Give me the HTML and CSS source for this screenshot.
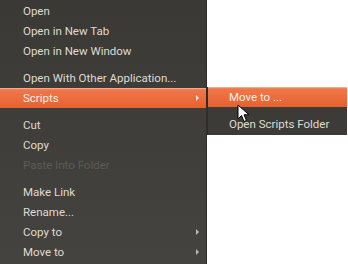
FILE: index.html
```html
<!DOCTYPE html>
<html lang="en">
<head>
    <meta charset="UTF-8">
    <title>Context Menu</title>
    <link rel="stylesheet" href="styles.css">
</head>
<body>

<div class="menu">
    <div class="item first">Open</div>
    <div class="item">Open in New Tab</div>
    <div class="item">Open in New Window</div>
    <div class="separator"></div>
    <div class="item">Open With Other Application...</div>
    <div class="item active has-sub">Scripts</div>
    <div class="separator"></div>
    <div class="item">Cut</div>
    <div class="item">Copy</div>
    <div class="item disabled">Paste Into Folder</div>
    <div class="separator"></div>
    <div class="item">Make Link</div>
    <div class="item">Rename...</div>
    <div class="item has-sub">Copy to</div>
    <div class="item has-sub">Move to</div>
</div>

<div class="submenu">
    <div class="item active">Move to ...</div>
    <div class="separator"></div>
    <div class="item">Open Scripts Folder</div>
</div>

<svg class="cursor" width="14" height="20" viewBox="0 0 14 20">
    <path d="M1 1 L1 15 L4.5 11.5 L7 17.5 L9.5 16.5 L7 10.8 L12 10.8 Z" fill="#fff" stroke="#000" stroke-width="1" stroke-linejoin="round"/>
</svg>

</body>
</html>
```

FILE: styles.css
```css
body {
    margin: 0;
    background: #fff;
    font-family: Roboto, 'Noto Sans', sans-serif;
    font-size: 11.5px;
    width: 348px;
    height: 264px;
    overflow: hidden;
    position: relative;
}
.menu {
    width: 207px;
    height: 264px;
    padding-top: 1px;
    box-sizing: border-box;
    background: linear-gradient(#3a3935, #45433f);
    border-right: 1px solid #2e2d2a;
}
.item {
    height: 20px;
    line-height: 20px;
    padding-left: 23px;
    color: #dfdbd2;
    white-space: nowrap;
    position: relative;
}
.item.disabled {
    color: #5c5b56;
}
.item.active {
    color: #fbf1ea;
    background: linear-gradient(#f39067, #ef7649 12%, #e6622f);
    box-shadow: inset 0 1px 0 #f7a888;
}
.has-sub::after {
    content: "";
    position: absolute;
    right: 7px;
    top: 7px;
    border-left: 3px solid #bdb9b1;
    border-top: 3px solid transparent;
    border-bottom: 3px solid transparent;
}
.has-sub.active::after {
    border-left-color: #f6ddd0;
}
.separator {
    height: 7px;
}
.submenu {
    position: absolute;
    left: 207px;
    top: 87px;
    width: 140px;
    height: 48px;
    background: #3c3b37;
    border-left: 1px solid #2e2d2a;
    box-sizing: border-box;
}
.submenu .item {
    padding-left: 21px;
}
.cursor {
    position: absolute;
    left: 237px;
    top: 104px;
}
```
